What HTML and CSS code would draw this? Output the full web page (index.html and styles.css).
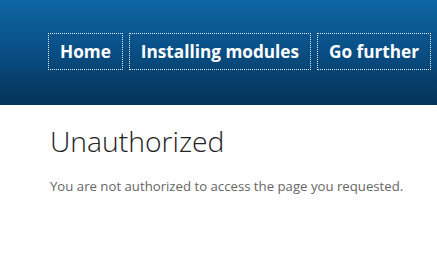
FILE: index.html
```html
<!DOCTYPE html>
<html>
<head>
<meta charset="utf-8">
<link rel="stylesheet" href="styles.css">
</head>
<body>
<header class="header">
  <nav class="nav">
    <a class="nav-item" href="#">Home</a>
    <a class="nav-item" href="#">Installing modules</a>
    <a class="nav-item" href="#">Go further</a>
  </nav>
</header>
<main class="content">
  <h1 class="title">Unauthorized</h1>
  <p class="message">You are not authorized to access the page you requested.</p>
</main>
</body>
</html>
```
FILE: styles.css
```css
html, body {
  margin: 0;
  padding: 0;
  background: #fff;
}
.header {
  height: 105px;
  background: linear-gradient(to bottom, #0e66a4 0%, #0a5088 45%, #053457 100%);
  box-sizing: border-box;
  padding: 33px 0 0 48px;
  overflow: hidden;
}
.nav {
  display: flex;
  gap: 6px;
}
.nav-item {
  display: block;
  flex-shrink: 0;
  height: 37px;
  box-sizing: border-box;
  border: 1px dotted #e6eef5;
  padding: 0 11px;
  line-height: 35px;
  color: #fff;
  text-decoration: none;
  font-family: "Open Sans", sans-serif;
  font-weight: 700;
  font-size: 17.2px;
  white-space: nowrap;
}
.content {
  padding: 18px 0 0 50px;
}
.title {
  margin: 0;
  font-family: "Open Sans", sans-serif;
  font-weight: 300;
  font-size: 28.3px;
  line-height: 36px;
  color: #222;
}
.message {
  margin: 18px 0 0;
  font-family: "Open Sans", sans-serif;
  font-size: 13.2px;
  line-height: 18px;
  color: #666;
}
```
